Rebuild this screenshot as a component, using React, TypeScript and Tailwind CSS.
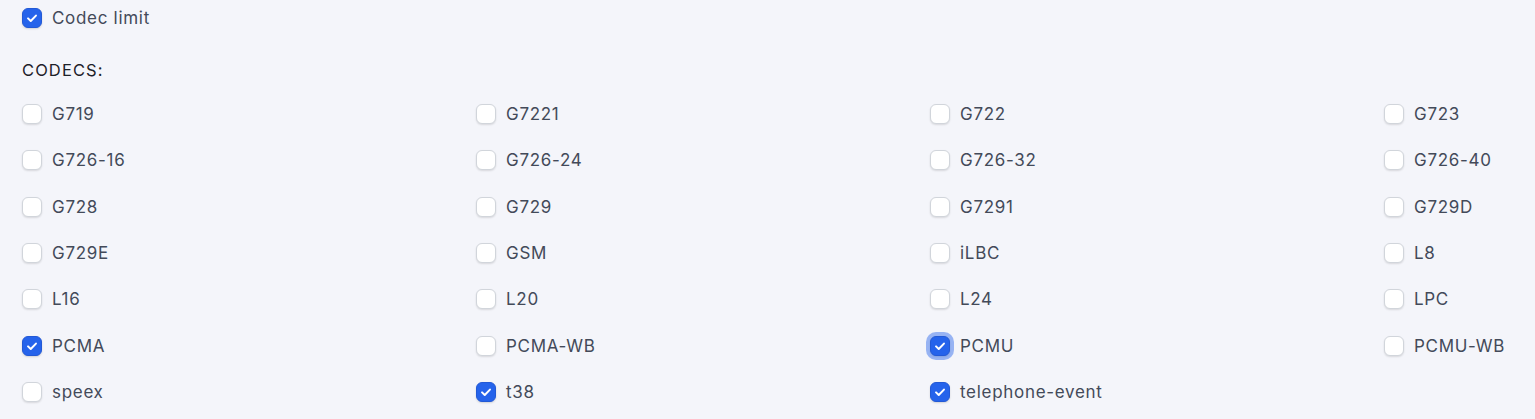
import React from "react";

const codecs: [string, boolean][] = [
  ["G719", false], ["G7221", false], ["G722", false], ["G723", false],
  ["G726-16", false], ["G726-24", false], ["G726-32", false], ["G726-40", false],
  ["G728", false], ["G729", false], ["G7291", false], ["G729D", false],
  ["G729E", false], ["GSM", false], ["iLBC", false], ["L8", false],
  ["L16", false], ["L20", false], ["L24", false], ["LPC", false],
  ["PCMA", true], ["PCMA-WB", false], ["PCMU", true], ["PCMU-WB", false],
  ["speex", false], ["t38", true], ["telephone-event", true],
];

function Box({ checked, focused }: { checked: boolean; focused?: boolean }) {
  return (
    <span
      className={
        "flex h-5 w-5 shrink-0 items-center justify-center rounded-[6px] " +
        (checked
          ? "bg-[#2563eb] border border-[#2259d6] shadow-[0_1px_2px_rgba(0,0,0,0.15)]"
          : "bg-white border border-[#d1d5db] shadow-[0_1px_2px_rgba(0,0,0,0.12)]") +
        (focused ? " ring-4 ring-[#2563eb]/45" : "")
      }
    >
      {checked && (
        <svg viewBox="0 0 20 20" className="h-5 w-5" fill="none">
          <path d="M5.6 10.4l3 2.9L14.4 7.3" stroke="white" strokeWidth="2.2" strokeLinecap="round" strokeLinejoin="round" />
        </svg>
      )}
    </span>
  );
}

function Item({ label, checked, focused }: { label: string; checked: boolean; focused?: boolean }) {
  return (
    <label className="flex h-5 items-center gap-[10px]">
      <Box checked={checked} focused={focused} />
      <span className="text-[17px] leading-5 tracking-[0.7px] text-[#434a59]">{label}</span>
    </label>
  );
}

export default function App() {
  return (
    <div
      className="min-h-[419px] w-full overflow-hidden bg-[#f4f5fa] pl-[22px] pt-2"
      style={{ fontFamily: "Inter, 'Noto Sans', sans-serif" }}
    >
      <Item label="Codec limit" checked={true} />
      <div className="mt-[32px] h-5 text-[16.5px] leading-5 tracking-[1.1px] text-[#1d2128]">CODECS:</div>
      <div className="mt-[24px] grid grid-cols-[454px_454px_454px_auto] gap-y-[26.33px]">
        {codecs.map(([name, c]) => (
          <Item key={name} label={name} checked={c} focused={name === "PCMU"} />
        ))}
      </div>
    </div>
  );
}
